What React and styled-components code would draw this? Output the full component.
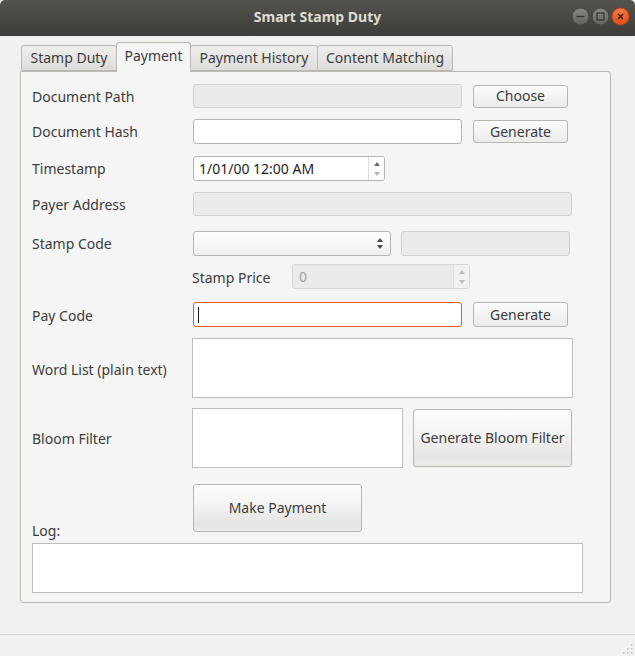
import React from 'react';
import styled, { createGlobalStyle } from 'styled-components';

const GlobalStyle = createGlobalStyle`
  html, body {
    margin: 0;
    padding: 0;
    background: #f2f1f0;
  }
  body {
    font-family: "Noto Sans", "DejaVu Sans", sans-serif;
    font-size: 14px;
    color: #3c3c3c;
  }
`;

const Window = styled.div`
  width: 635px;
  height: 656px;
  display: flex;
  flex-direction: column;
  background: #f2f1f0;
  overflow: hidden;
`;

const TitleBar = styled.div`
  flex: none;
  height: 36px;
  display: grid;
  grid-template-columns: 1fr auto 1fr;
  align-items: center;
  background: linear-gradient(#55534e, #3d3c38);
  border-radius: 5px 5px 0 0;
  color: #dfdbd2;
  font-weight: bold;
  font-size: 14px;
  padding-bottom: 4px;
  box-sizing: border-box;
`;

const Title = styled.div`
  grid-column: 2;
`;

const Controls = styled.div`
  grid-column: 3;
  justify-self: end;
  display: flex;
  gap: 1px;
  padding-right: 5px;
`;

const Body = styled.div`
  flex: 1;
  padding: 6px 24px 0 20px;
`;

const TabBar = styled.div`
  display: flex;
  align-items: flex-end;
  height: 29px;
  padding-left: 1px;
`;

const Tab = styled.div`
  width: ${p => p.$w}px;
  height: ${p => (p.$active ? 30 : 26)}px;
  margin-bottom: ${p => (p.$active ? -1 : 0)}px;
  margin-right: -1px;
  box-sizing: border-box;
  display: flex;
  align-items: center;
  justify-content: center;
  padding-bottom: ${p => (p.$active ? 4 : 1)}px;
  border: 1px solid #bcb8b3;
  border-bottom: ${p => (p.$active ? 'none' : '1px solid #bcb8b3')};
  border-radius: 3px 3px 0 0;
  background: ${p => (p.$active ? '#f5f5f5' : 'linear-gradient(#efefee, #dddcdb)')};
  position: relative;
  z-index: ${p => (p.$active ? 2 : 1)};
  white-space: nowrap;
`;

const Panel = styled.div`
  height: 532px;
  box-sizing: border-box;
  border: 1px solid #bcb8b3;
  border-radius: 0 3px 3px 3px;
  background: #f5f5f5;
  padding-left: 11px;
  display: flex;
  flex-direction: column;
  position: relative;
  z-index: 1;
`;

const Row = styled.div`
  display: flex;
  align-items: center;
  height: ${p => p.$h}px;
  margin-top: ${p => p.$mt}px;
  gap: ${p => (p.$gap === undefined ? 11 : p.$gap)}px;
`;

const Label = styled.div`
  width: ${p => (p.$w === undefined ? 150 : p.$w)}px;
  flex: none;
  white-space: nowrap;
  padding-top: ${p => p.$low || 0}px;
`;

const LineEdit = styled.div`
  width: ${p => p.$w}px;
  height: 100%;
  box-sizing: border-box;
  flex: none;
  display: flex;
  align-items: center;
  padding: 0 4px;
  border: 1px solid ${p => (p.$focus ? '#e45a28' : p.$disabled ? '#d3d0cc' : '#b7b4b0')};
  border-radius: 3px;
  background: ${p => (p.$disabled ? '#ebebea' : '#ffffff')};
  color: ${p => (p.$disabled ? '#9b9b9b' : '#1e1e1e')};
`;

const Caret = styled.span`
  width: 1px;
  height: 16px;
  background: #1a1a1a;
`;

const Button = styled.button`
  width: ${p => p.$w}px;
  height: ${p => p.$h}px;
  flex: none;
  box-sizing: border-box;
  border: 1px solid #b9b6b2;
  border-radius: 3px;
  background: ${p =>
    p.$tall
      ? 'linear-gradient(#fdfdfd 0%, #f3f3f3 45%, #e4e4e3 85%, #ececeb 100%)'
      : 'linear-gradient(#fcfcfc, #ebebea)'};
  font-family: inherit;
  font-size: 14px;
  color: #3c3c3c;
  padding: 0 0 1px;
  margin: 0;
`;

const SpinBox = styled.div`
  width: ${p => p.$w}px;
  height: 100%;
  box-sizing: border-box;
  flex: none;
  display: flex;
  border: 1px solid ${p => (p.$disabled ? '#d9d7d3' : '#b7b4b0')};
  border-radius: 3px;
  background: ${p => (p.$disabled ? '#ebebea' : '#ffffff')};
  color: ${p => (p.$disabled ? '#a0a0a0' : '#1e1e1e')};
  overflow: hidden;
`;

const SpinText = styled.div`
  flex: 1;
  display: flex;
  align-items: center;
  padding-left: ${p => p.$pad}px;
`;

const SpinArrows = styled.div`
  width: 15px;
  display: flex;
  flex-direction: column;
  align-items: center;
  justify-content: center;
  gap: 6px;
  border-left: 1px solid ${p => (p.$disabled ? '#e2e0dd' : '#dedcd9')};
  background: ${p => (p.$disabled ? '#f1f1f0' : '#ffffff')};
`;

const Combo = styled.div`
  width: ${p => p.$w}px;
  height: 100%;
  box-sizing: border-box;
  flex: none;
  display: flex;
  align-items: center;
  justify-content: flex-end;
  padding-right: 7px;
  border: 1px solid #b7b4b0;
  border-radius: 3px;
  background: linear-gradient(#ffffff, #efefee);
`;

const ComboArrows = styled.div`
  display: flex;
  flex-direction: column;
  gap: 3px;
`;

const TextEdit = styled.div`
  width: ${p => p.$w}px;
  height: ${p => p.$h}px;
  box-sizing: border-box;
  flex: none;
  border: 1px solid #bfbebd;
  background: #ffffff;
`;

const LogLabel = styled.div`
  margin-top: -9px;
  height: 16px;
  line-height: 16px;
`;

const LogRow = styled.div`
  margin-top: 4px;
`;

const StatusBar = styled.div`
  flex: none;
  height: 22px;
  box-sizing: border-box;
  border-top: 1px solid #d8d5d1;
  display: flex;
  justify-content: flex-end;
  align-items: flex-end;
  padding: 0 2px 2px 0;
`;

const Arrow = ({ up, color }) => (
  <svg width="6" height="4" viewBox="0 0 6 4">
    <path d={up ? 'M0 4 L3 0 L6 4 Z' : 'M0 0 L3 4 L6 0 Z'} fill={color} />
  </svg>
);

const WinButton = ({ kind }) => {
  const close = kind === 'close';
  return (
    <svg width="19" height="19" viewBox="0 0 19 19">
      <defs>
        <linearGradient id={`g-${kind}`} x1="0" y1="0" x2="0" y2="1">
          <stop offset="0" stopColor={close ? '#f57a45' : '#8a8883'} />
          <stop offset="1" stopColor={close ? '#df4d17' : '#64625e'} />
        </linearGradient>
      </defs>
      <circle cx="9.5" cy="9.5" r="8.5" fill={`url(#g-${kind})`} stroke={close ? '#b8431a' : '#454440'} strokeWidth="1" />
      {kind === 'min' && <path d="M5.5 9.5 H13.5" stroke="#33322f" strokeWidth="1.4" />}
      {kind === 'max' && <rect x="6" y="6" width="7" height="7" fill="none" stroke="#33322f" strokeWidth="1.2" />}
      {close && <path d="M7 7 L12 12 M12 7 L7 12" stroke="#3a1a0c" strokeWidth="1.4" />}
    </svg>
  );
};

const SizeGrip = () => (
  <svg width="12" height="12" viewBox="0 0 12 12">
    {[[10, 2], [10, 6], [6, 6], [10, 10], [6, 10], [2, 10]].map(([x, y], i) => (
      <rect key={i} x={x} y={y} width="1.5" height="1.5" fill="#c4c1bd" />
    ))}
  </svg>
);

const tabs = [
  { name: 'Stamp Duty', w: 96 },
  { name: 'Payment', w: 75, active: true },
  { name: 'Payment History', w: 128 },
  { name: 'Content Matching', w: 136 },
];

export default function App() {
  return (
    <Window>
      <GlobalStyle />
      <TitleBar>
        <Title>Smart Stamp Duty</Title>
        <Controls>
          <WinButton kind="min" />
          <WinButton kind="max" />
          <WinButton kind="close" />
        </Controls>
      </TitleBar>
      <Body>
        <TabBar>
          {tabs.map(t => (
            <Tab key={t.name} $w={t.w} $active={t.active}>{t.name}</Tab>
          ))}
        </TabBar>
        <Panel>
          <Row $h={24} $mt={12}>
            <Label>Document Path</Label>
            <LineEdit $w={269} $disabled />
            <Button $w={95} $h={23}>Choose</Button>
          </Row>
          <Row $h={25} $mt={11}>
            <Label>Document Hash</Label>
            <LineEdit $w={269} />
            <Button $w={95} $h={23}>Generate</Button>
          </Row>
          <Row $h={25} $mt={12}>
            <Label>Timestamp</Label>
            <SpinBox $w={192}>
              <SpinText $pad={5}>1/01/00 12:00 AM</SpinText>
              <SpinArrows>
                <Arrow up color="#6a6a6a" />
                <Arrow color="#b4b4b4" />
              </SpinArrows>
            </SpinBox>
          </Row>
          <Row $h={24} $mt={11}>
            <Label>Payer Address</Label>
            <LineEdit $w={379} $disabled />
          </Row>
          <Row $h={25} $mt={15} $gap={10}>
            <Label $w={151}>Stamp Code</Label>
            <Combo $w={198}>
              <ComboArrows>
                <Arrow up color="#4a4a4a" />
                <Arrow color="#4a4a4a" />
              </ComboArrows>
            </Combo>
            <LineEdit $w={169} $disabled />
          </Row>
          <Row $h={25} $mt={8} $gap={0}>
            <Label $w={160} />
            <Label $w={100} $low={2}>Stamp Price</Label>
            <SpinBox $w={178} $disabled>
              <SpinText $pad={6}>0</SpinText>
              <SpinArrows $disabled>
                <Arrow up color="#bdbdbd" />
                <Arrow color="#bdbdbd" />
              </SpinArrows>
            </SpinBox>
          </Row>
          <Row $h={25} $mt={13}>
            <Label $low={2}>Pay Code</Label>
            <LineEdit $w={269} $focus>
              <Caret />
            </LineEdit>
            <Button $w={95} $h={25}>Generate</Button>
          </Row>
          <Row $h={60} $mt={11} $gap={0}>
            <Label $w={160} $low={2}>Word List (plain text)</Label>
            <TextEdit $w={381} $h={60} />
          </Row>
          <Row $h={60} $mt={10} $gap={10}>
            <Label $w={150}>Bloom Filter</Label>
            <TextEdit $w={211} $h={60} />
            <Button $w={159} $h={58} $tall>Generate Bloom Filter</Button>
          </Row>
          <Row $h={48} $mt={16} $gap={0}>
            <Label $w={161} />
            <Button $w={169} $h={48} $tall>Make Payment</Button>
          </Row>
          <LogLabel>Log:</LogLabel>
          <LogRow>
            <TextEdit $w={551} $h={50} />
          </LogRow>
        </Panel>
      </Body>
      <StatusBar>
        <SizeGrip />
      </StatusBar>
    </Window>
  );
}
